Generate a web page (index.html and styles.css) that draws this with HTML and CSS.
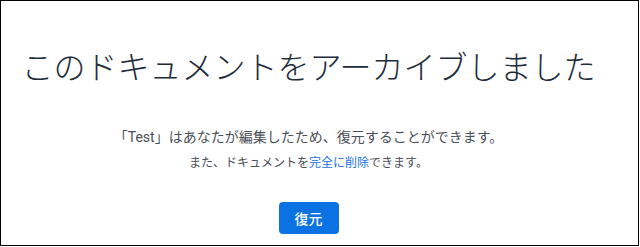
FILE: index.html
```html
<!DOCTYPE html>
<html lang="ja">
<head>
<meta charset="utf-8">
<link rel="stylesheet" href="styles.css">
</head>
<body>
<div class="frame">
  <div class="content">
    <h1 class="title">このドキュメントをアーカイブしました</h1>
    <p class="desc">「Test」はあなたが編集したため、復元することができます。</p>
    <p class="note">また、ドキュメントを<a class="link" href="#">完全に削除</a>できます。</p>
    <button class="restore" type="button">復元</button>
  </div>
</div>
</body>
</html>
```
FILE: styles.css
```css
html, body {
  margin: 0;
  padding: 0;
  background: #fff;
}
body {
  font-family: Roboto, "Noto Sans CJK JP", sans-serif;
}
.frame {
  width: 637px;
  height: 244px;
  border: 1px solid #000;
  overflow: hidden;
}
.content {
  padding: 47px 22px 0 0;
  display: flex;
  flex-direction: column;
  align-items: center;
  text-align: center;
}
.title {
  margin: 0;
  font-size: 32px;
  line-height: 40px;
  font-weight: 300;
  color: #1e2b3a;
  white-space: nowrap;
}
.desc {
  margin: 39px 0 0;
  font-size: 14px;
  line-height: 20px;
  color: #4b4f56;
}
.note {
  margin: 6px 0 0;
  font-size: 12px;
  line-height: 20px;
  color: #4b4f56;
}
.link {
  color: #1a73e8;
  text-decoration: none;
}
.restore {
  margin-top: 29px;
  width: 60px;
  height: 32px;
  border: none;
  border-radius: 4px;
  background: #0a72e3;
  color: #fff;
  font-family: Roboto, "Noto Sans CJK JP", sans-serif;
  font-size: 14px;
  font-weight: 500;
  padding: 0;
  cursor: pointer;
}
```
